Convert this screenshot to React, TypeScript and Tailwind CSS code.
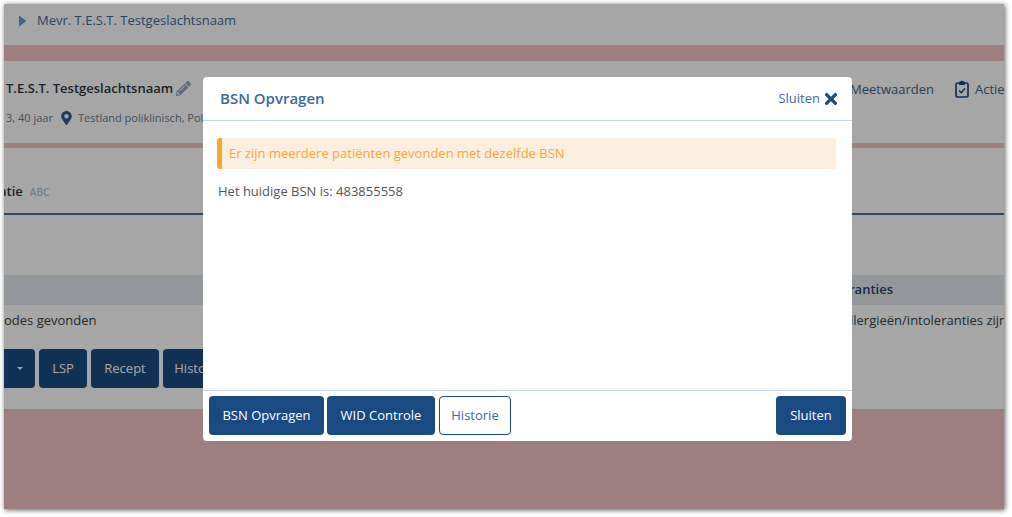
import { FaMapMarkerAlt, FaPencilAlt, FaTimes } from 'react-icons/fa'

function DarkButton({ children, className = '' }: { children: React.ReactNode; className?: string }) {
  return (
    <button className={`flex h-[39px] items-center justify-center rounded-[4px] bg-[#1a4a82] text-[13px] text-white ${className}`}>
      {children}
    </button>
  )
}

function ClipboardIcon() {
  return (
    <svg width="14" height="18" viewBox="0 0 14 18" fill="none" className="shrink-0 text-[#1a4a82]">
      <rect x="1" y="3" width="12" height="14" rx="1.5" stroke="currentColor" strokeWidth="1.7" />
      <path d="M4 1.8 H5.2 C5.4 0.4 8.6 0.4 8.8 1.8 H10 V5 H4 Z" fill="currentColor" />
      <path d="M4 10.5 L6.2 12.7 L10 8.6" stroke="currentColor" strokeWidth="1.5" />
    </svg>
  )
}

function BackgroundPage() {
  return (
    <div className="flex h-full flex-col text-[13px] text-[#3a3f45]">
      <div className="flex h-[41px] items-center gap-[10px] pb-[8px] pl-[15px] text-[#3f6a9c]">
        <svg width="8" height="12" viewBox="0 0 8 12" className="fill-[#6a9ccb]">
          <path d="M0 0.5 L7.5 6 L0 11.5 Z" />
        </svg>
        <span className="text-[13px]">Mevr. T.E.S.T. Testgeslachtsnaam</span>
      </div>
      <div className="h-[16px] bg-[#f1c4c3]" />

      <div className="flex h-[82px] overflow-hidden">
        <div className="ml-[2px] pt-[18px]">
          <div className="flex items-center gap-[3px] whitespace-nowrap text-[13px] font-semibold text-[#2b3540]">
            T.E.S.T. Testgeslachtsnaam
            <FaPencilAlt className="h-[15px] w-[15px] text-[#8ba3bf]" />
          </div>
          <div className="mt-[11px] flex items-center whitespace-nowrap text-[11px] text-[#6b7c91]">
            <span className="w-[55px]">3, 40 jaar</span>
            <FaMapMarkerAlt className="h-[14px] w-[11px] text-[#2d5f93]" />
            <span className="ml-[6px]">Testland poliklinisch, Poli</span>
          </div>
        </div>
        <div className="ml-auto flex items-start gap-[21px] pt-[18px] text-[13px] text-[#3f5f85]">
          <span className="leading-[20px]">Meetwaarden</span>
          <span className="flex w-[49px] items-center gap-[6px] overflow-hidden whitespace-nowrap leading-[20px]">
            <ClipboardIcon />
            Acties
          </span>
        </div>
      </div>
      <div className="h-[5px] bg-[#f1c4c3]" />

      <div className="flex h-[65px] items-center overflow-hidden whitespace-nowrap pt-[23px]">
        <span className="ml-[-5px] text-[13px] font-semibold text-[#2b3540]">atie</span>
        <span className="ml-[7px] text-[10px] font-semibold text-[#b3c2d2]">ABC</span>
      </div>
      <div className="h-[2px] bg-[#3f6fa3]" />

      <div className="h-[60px]" />
      <div className="flex h-[30px] items-center justify-end bg-[#e2e7ed] pr-[111px] text-[13px] font-semibold text-[#1f4272]">
        ranties
      </div>
      <div className="flex h-[30px] items-center justify-between whitespace-nowrap pt-[2px] text-[13px]">
        <span>odes gevonden</span>
        <span className="w-[154px] overflow-hidden">llergieën/intoleranties zijn</span>
      </div>

      <div className="flex h-[74px] gap-[4px] pt-[14px]">
        <div className="flex h-[39px] w-[31px] items-center justify-center rounded-r-[4px] bg-[#1a4a82]">
          <div className="h-0 w-0 border-x-[3px] border-t-[3px] border-x-transparent border-t-white" />
        </div>
        <DarkButton className="w-[48px]">LSP</DarkButton>
        <DarkButton className="w-[68px]">Recept</DarkButton>
        <DarkButton className="w-[70px]">Historie</DarkButton>
      </div>

      <div className="flex-1 bg-[#f1c4c3]" />
    </div>
  )
}

export default function App() {
  return (
    <div className="h-[517px] w-[1012px] bg-white p-[4px] pb-[8px] pr-[8px] font-['Open_Sans',sans-serif]">
      <div className="relative h-full w-full overflow-hidden bg-white shadow-[1px_1px_5px_rgba(0,0,0,0.65)]">
        <BackgroundPage />
        <div className="absolute inset-0 bg-black/35" />

        <div className="absolute left-[199px] top-[73px] flex h-[364px] w-[649px] flex-col rounded-[4px] bg-white">
          <div className="flex h-[44px] items-center justify-between border-b border-[#c3d6e6] pl-[17px] pr-[12px]">
            <span className="text-[15px] font-semibold text-[#3a6a9f]">BSN Opvragen</span>
            <span className="flex items-center gap-[2px] text-[13px] text-[#3a6a9f]">
              Sluiten
              <FaTimes className="h-[18px] w-[18px] text-[#1a4a82]" />
            </span>
          </div>

          <div className="flex-1 pl-[14px] pr-[16px] pt-[17px]">
            <div className="flex h-[31px] items-center rounded-[3px] border-l-[5px] border-[#f5a733] bg-[#fdefe0] pl-[7px] text-[13px] text-[#f5a733]">
              Er zijn meerdere patiënten gevonden met dezelfde BSN
            </div>
            <p className="mt-[13px] pl-[1px] text-[13px] leading-[18px] text-[#555]">Het huidige BSN is: 483855558</p>
          </div>

          <div className="flex h-[51px] items-start gap-[3px] border-t border-[#c9d6e8] px-[6px] pt-[5px]">
            <DarkButton className="w-[115px] font-medium">BSN Opvragen</DarkButton>
            <DarkButton className="w-[108px] font-medium">WID Controle</DarkButton>
            <button className="ml-[1px] flex h-[39px] w-[72px] items-center justify-center rounded-[4px] border border-[#1a4a82] bg-white text-[13px] text-[#3a6a9f]">
              Historie
            </button>
            <DarkButton className="ml-auto w-[70px] font-medium">Sluiten</DarkButton>
          </div>
        </div>
      </div>
    </div>
  )
}
